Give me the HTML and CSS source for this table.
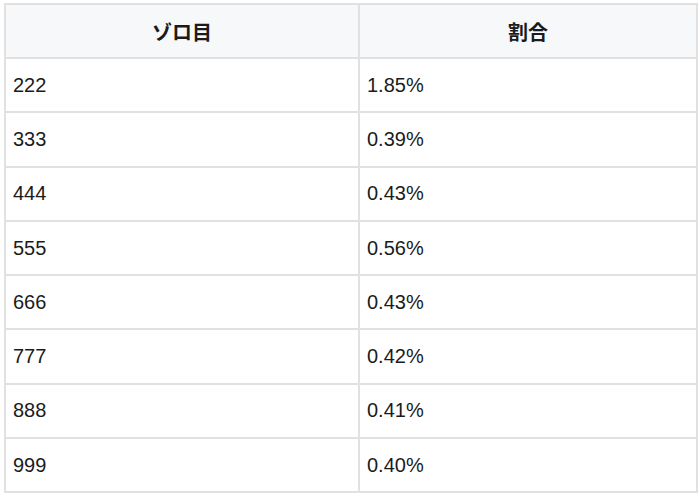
FILE: index.html
```html
<!DOCTYPE html>
<html lang="ja">
<head>
<meta charset="utf-8">
<link rel="stylesheet" href="styles.css">
</head>
<body>
<table class="odds">
  <colgroup><col class="c1"><col class="c2"></colgroup>
  <thead>
    <tr class="head"><th>ゾロ目</th><th>割合</th></tr>
  </thead>
  <tbody>
    <tr><td>222</td><td>1.85%</td></tr>
    <tr><td>333</td><td>0.39%</td></tr>
    <tr><td>444</td><td>0.43%</td></tr>
    <tr><td>555</td><td>0.56%</td></tr>
    <tr><td>666</td><td>0.43%</td></tr>
    <tr><td>777</td><td>0.42%</td></tr>
    <tr><td>888</td><td>0.41%</td></tr>
    <tr><td>999</td><td>0.40%</td></tr>
  </tbody>
</table>
</body>
</html>
```
FILE: styles.css
```css
html, body {
  margin: 0;
  padding: 0;
  background: #ffffff;
}
body {
  padding: 3px 4px 0 4px;
  font-family: "Liberation Sans", Arial, "Noto Sans CJK JP", sans-serif;
  color: #1b1b1b;
}
.odds {
  border-collapse: collapse;
  table-layout: fixed;
  width: 692px;
}
.c1 { width: 354px; }
.c2 { width: 338px; }
.odds th,
.odds td {
  border: 2px solid #e1e1e1;
  padding: 0 7px;
  vertical-align: middle;
  box-sizing: border-box;
}
.odds tr { height: 54.3px; }
.odds tr.head { height: 54px; }
.odds th {
  background: #f7f8fa;
  font-weight: bold;
  font-size: 20px;
  text-align: center;
  font-family: "Noto Sans CJK JP", "Liberation Sans", sans-serif;
}
.odds td {
  font-size: 20px;
  text-align: left;
}
```
